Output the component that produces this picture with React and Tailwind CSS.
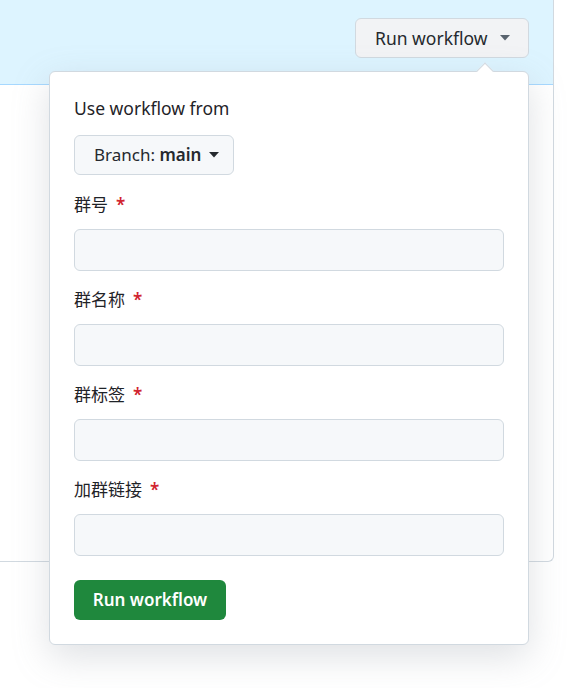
const font = { fontFamily: '"Noto Sans", "Noto Sans CJK SC", sans-serif' };

function Caret({ className = '' }) {
  return (
    <svg width="10" height="6" viewBox="0 0 10 6" className={className}>
      <path d="M0 0 L10 0 L5 5.5 Z" fill="currentColor" />
    </svg>
  );
}

function Field({ label }) {
  return (
    <div className="flex flex-col">
      <label className="flex items-center h-6 text-[17px] text-[#1f2328]">
        {label}
        <span className="ml-2 text-[#d1242f] font-semibold">*</span>
      </label>
      <input className="mt-3 h-[42px] w-full rounded-md border border-[#d1d9e0] bg-[#f6f8fa] px-3 outline-none" />
    </div>
  );
}

export default function App() {
  return (
    <div className="relative h-[688px] w-[583px] overflow-hidden bg-white text-[#1f2328]" style={font}>
      <div className="h-[562px] w-[554px] rounded-br-md border-r border-b border-[#d1d9e0] bg-white">
        <div className="flex h-[85px] justify-end border-b border-[#54aeff66] bg-[#ddf4ff] pt-[18px] pr-6">
          <button className="flex h-10 w-[174px] items-center rounded-md border border-[#d1d9e0] bg-[#f2f3f5] pl-[19px] text-[17.5px] text-[#25292e]">
            Run workflow
            <Caret className="ml-auto mr-[18px] text-[#59636e]" />
          </button>
        </div>
      </div>

      {/* popover */}
      <div className="absolute left-[49px] top-[71px] w-[480px] rounded-md border border-[#d1d9e0] bg-white p-6 shadow-[0_12px_36px_rgba(140,149,159,0.28)]">
        <div className="absolute -top-[7px] right-[37px] h-3 w-3 rotate-45 border-l border-t border-[#d1d9e0] bg-white" />
        <div className="h-6 text-[17.5px] leading-6">Use workflow from</div>
        <button className="mt-[15px] flex h-10 w-[160px] items-center gap-2 rounded-md border border-[#d1d9e0] bg-[#f6f8fa] pl-[19px] text-[17px] text-[#25292e]">
          <span>
            Branch: <span className="font-semibold">main</span>
          </span>
          <Caret className="text-[#25292e]" />
        </button>
        <div className="mt-[18px] flex flex-col gap-[17px]">
          <Field label="群号" />
          <Field label="群名称" />
          <Field label="群标签" />
          <Field label="加群链接" />
        </div>
        <button className="mt-6 flex h-10 w-[152px] items-center justify-center rounded-md bg-[#1f883d] text-[17px] font-semibold text-white">
          Run workflow
        </button>
      </div>
    </div>
  );
}
